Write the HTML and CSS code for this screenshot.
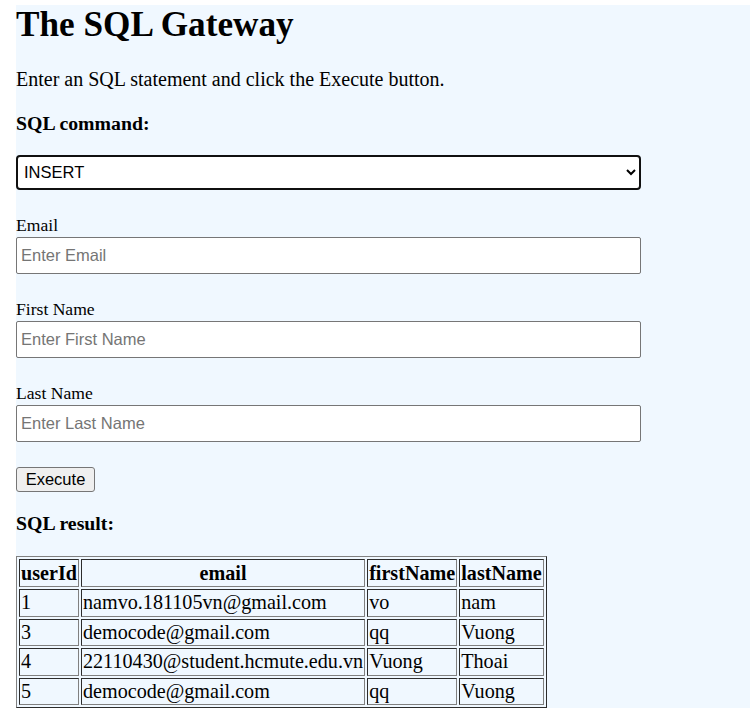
FILE: index.html
```html
<!DOCTYPE html>
<html>
<head>
<meta charset="utf-8">
<title>SQL Gateway</title>
<link rel="stylesheet" href="styles.css">
</head>
<body>
<div class="page">
  <h1 class="title">The SQL Gateway</h1>
  <p class="intro">Enter an SQL statement and click the Execute button.</p>
  <p class="section">SQL command:</p>
  <form class="form">
    <select class="command">
      <option>INSERT</option>
      <option>UPDATE</option>
      <option>DELETE</option>
      <option>SELECT</option>
    </select>
    <div class="fields">
      <div class="field">
        <label class="label" for="email">Email</label>
        <input class="input" id="email" type="text" placeholder="Enter Email">
      </div>
      <div class="field">
        <label class="label" for="first">First Name</label>
        <input class="input" id="first" type="text" placeholder="Enter First Name">
      </div>
      <div class="field">
        <label class="label" for="last">Last Name</label>
        <input class="input" id="last" type="text" placeholder="Enter Last Name">
      </div>
    </div>
    <div class="actions"><button class="button" type="button">Execute</button></div>
  </form>
  <p class="section result-title">SQL result:</p>
  <table class="result" border="1">
    <tr><th>userId</th><th>email</th><th>firstName</th><th>lastName</th></tr>
    <tr><td>1</td><td>namvo.181105vn@gmail.com</td><td>vo</td><td>nam</td></tr>
    <tr><td>3</td><td>democode@gmail.com</td><td>qq</td><td>Vuong</td></tr>
    <tr><td>4</td><td>22110430@student.hcmute.edu.vn</td><td>Vuong</td><td>Thoai</td></tr>
    <tr><td>5</td><td>democode@gmail.com</td><td>qq</td><td>Vuong</td></tr>
  </table>
</div>
</body>
</html>
```
FILE: styles.css
```css
html {
  background: #ffffff;
}
body {
  margin: 0;
  font-family: "Liberation Serif", "Times New Roman", serif;
  color: #000;
}
.page {
  margin: 5px 0 0 16px;
  background: #f0f8ff;
  min-height: 760px;
  padding-top: 0.1px;
}
.title {
  font-size: 35.2px;
  font-weight: bold;
  margin: -0.1px 0 0 0;
  line-height: normal;
}
.intro {
  font-size: 20px;
  margin: 22.5px 0 0 0;
}
.section {
  font-size: 19.8px;
  font-weight: bold;
  margin: 21px 0 0 0;
}
.form {
  margin-top: 20px;
  display: flex;
  flex-direction: column;
}
.command {
  width: 625px;
  height: 35.3px;
  box-sizing: border-box;
  border: 2px solid #101010;
  border-radius: 4px;
  background: #ffffff;
  font-family: "Liberation Sans", Arial, sans-serif;
  font-size: 16.5px;
  color: #000;
  padding: 0 2px;
  margin: 0;
}
.fields {
  margin-top: 25.5px;
  display: flex;
  flex-direction: column;
  gap: 24.8px;
}
.field {
  display: flex;
  flex-direction: column;
  gap: 1px;
}
.label {
  font-size: 17.6px;
  line-height: normal;
}
.input {
  width: 625px;
  height: 37px;
  box-sizing: border-box;
  border: 1px solid #767676;
  border-radius: 2px;
  background: #ffffff;
  font-family: "Liberation Sans", Arial, sans-serif;
  font-size: 16.5px;
  padding: 0 4px;
  margin: 0;
}
.input::placeholder {
  color: #757575;
}
.actions {
  margin-top: 25.5px;
}
.button {
  height: 25px;
  width: 79px;
  box-sizing: border-box;
  border: 1px solid #767676;
  border-radius: 3px;
  background: #efefef;
  font-family: "Liberation Sans", Arial, sans-serif;
  font-size: 16.5px;
  color: #000;
  padding: 0;
  margin: 0;
}
.result-title {
  margin-top: 20px;
}
.result {
  margin-top: 21px;
  border-collapse: separate;
  border-spacing: 2px;
  border: 1px outset #808080;
  font-size: 20.15px;
}
.result th,
.result td {
  border: 1px inset #808080;
  padding: 1.3px 1px;
}
.result th {
  font-weight: bold;
  text-align: center;
}
.result td {
  text-align: left;
}
```
